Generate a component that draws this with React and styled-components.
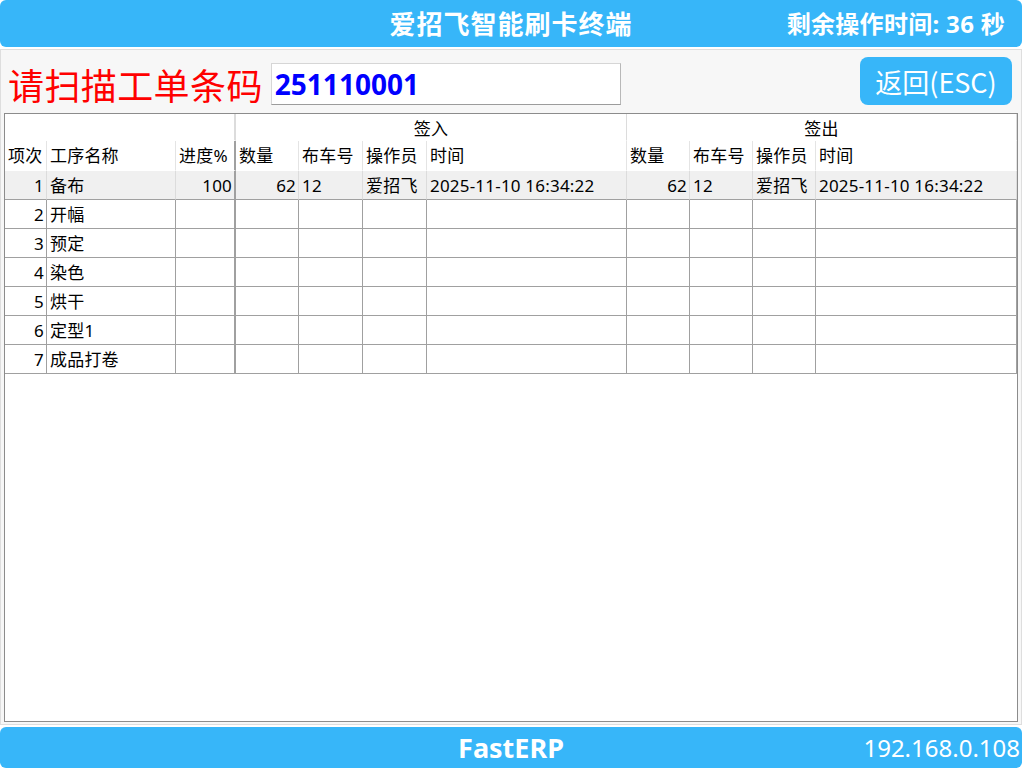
import React from "react"
import styled, { createGlobalStyle } from "styled-components"

const COLS = "42px 129px 60px 63px 64px 64px 200px 63px 63px 63px 201px"
const BLUE = "#37b6f9"

const ALIGN = ["right", "left", "right", "right", "left", "left", "left", "right", "left", "left", "left"]
const HEADERS = ["项次", "工序名称", "进度%", "数量", "布车号", "操作员", "时间", "数量", "布车号", "操作员", "时间"]

const ROWS = [
  ["1", "备布", "100", "62", "12", "爱招飞", "2025-11-10 16:34:22", "62", "12", "爱招飞", "2025-11-10 16:34:22"],
  ["2", "开幅"],
  ["3", "预定"],
  ["4", "染色"],
  ["5", "烘干"],
  ["6", "定型1"],
  ["7", "成品打卷"],
]

const GlobalStyle = createGlobalStyle`
  html, body {
    margin: 0;
    padding: 0;
    background: #fff;
  }
  body {
    font-family: "Noto Sans", "Noto Sans CJK SC", sans-serif;
  }
`

const Screen = styled.div`
  width: 1024px;
  height: 768px;
  display: flex;
  flex-direction: column;
  overflow: hidden;
`

const TopBar = styled.div`
  height: 47px;
  margin: 0 2px 2px 0;
  background: ${BLUE};
  border-radius: 6px;
  display: grid;
  grid-template-columns: 1fr auto 1fr;
  align-items: center;
  color: #fff;
  font-weight: bold;
`

const Title = styled.div`
  grid-column: 2;
  font-size: 26px;
  letter-spacing: 1px;
  line-height: 1;
`

const Timer = styled.div`
  grid-column: 3;
  justify-self: end;
  padding-right: 17px;
  font-size: 24px;
  letter-spacing: 0.3px;
  line-height: 1;
`

const Panel = styled.div`
  flex: 1;
  margin-right: 2px;
  background: #f7f7f7;
  border: 1px solid #dedede;
  display: flex;
  flex-direction: column;
  padding: 0 3px 2px 3px;
  min-height: 0;
`

const Toolbar = styled.div`
  height: 63px;
  display: flex;
  align-items: flex-start;
`

const ScanLabel = styled.div`
  margin: 14px 0 0 4px;
  color: #ff0000;
  font-family: "Noto Sans CJK SC", sans-serif;
  font-size: 36px;
  letter-spacing: 0.4px;
  line-height: 40px;
`

const CodeInput = styled.div`
  margin: 13px 0 0 8px;
  width: 345px;
  height: 40px;
  background: #fff;
  border: 1px solid #d6d6d6;
  border-right-color: #b8b8b8;
  border-bottom-color: #9c9c9c;
  display: flex;
  align-items: center;
  padding-left: 3px;
  color: #0000ff;
  font-weight: bold;
  font-size: 28px;
`

const BackButton = styled.button`
  margin: 7px 6px 0 auto;
  width: 152px;
  height: 48px;
  border: none;
  border-radius: 8px;
  background: ${BLUE};
  color: #fff;
  font-family: "Noto Sans CJK SC", sans-serif;
  font-size: 27px;
  padding: 0;
  cursor: pointer;
`

const Table = styled.div`
  flex: 1;
  background: #fff;
  border: 1px solid #8c8c8c;
  font-size: 17px;
  color: #000;
`

const Row = styled.div`
  display: grid;
  grid-template-columns: ${COLS};
  height: ${p => p.$h}px;
  background: ${p => p.$bg || "transparent"};
`

const Cell = styled.div`
  display: flex;
  align-items: center;
  justify-content: ${p => (p.$align === "right" ? "flex-end" : p.$align === "center" ? "center" : "flex-start")};
  padding: ${p => (p.$align === "right" ? "0 2px 0 0" : "0 0 0 3px")};
  border-right: ${p => (p.$thick ? 2 : 1)}px solid ${p => p.$line || "transparent"};
  border-bottom: 1px solid ${p => p.$bottom || "transparent"};
  box-sizing: border-box;
  white-space: nowrap;
  overflow: hidden;
  line-height: 1;
  letter-spacing: 0.2px;
  grid-column: ${p => p.$span || "auto"};
`

const GroupCell = styled(Cell)`
  padding: 0;
  padding-top: 2px;
`

const BottomBar = styled.div`
  height: 41px;
  margin: 2px 2px 0 0;
  background: ${BLUE};
  border-radius: 6px;
  display: grid;
  grid-template-columns: 1fr auto 1fr;
  align-items: center;
  color: #fff;
`

const Brand = styled.div`
  grid-column: 2;
  font-weight: bold;
  font-size: 27px;
  line-height: 1;
`

const Address = styled.div`
  grid-column: 3;
  justify-self: end;
  padding-right: 2px;
  font-size: 24px;
  line-height: 1;
`

function DataRow({ cells, first }) {
  return (
    <Row $h={29} $bg={first ? "#f0f0f0" : "#fff"}>
      {ALIGN.map((align, i) => (
        <Cell
          key={i}
          $align={align}
          $thick={i === 2}
          $line={i === 2 || !first ? "#a0a0a0" : "#dcdcdc"}
          $bottom="#a0a0a0"
        >
          {cells[i] || ""}
        </Cell>
      ))}
    </Row>
  )
}

export default function App() {
  return (
    <Screen>
      <GlobalStyle />
      <TopBar>
        <Title>爱招飞智能刷卡终端</Title>
        <Timer>剩余操作时间: 36 秒</Timer>
      </TopBar>

      <Panel>
        <Toolbar>
          <ScanLabel>请扫描工单条码</ScanLabel>
          <CodeInput>251110001</CodeInput>
          <BackButton>返回(ESC)</BackButton>
        </Toolbar>

        <Table>
          <Row $h={27}>
            <GroupCell $span="1 / 4" $thick $line="#dcdcdc" />
            <GroupCell $span="4 / 8" $align="center" $line="#dcdcdc">签入</GroupCell>
            <GroupCell $span="8 / 12" $align="center" $line="#dcdcdc">签出</GroupCell>
          </Row>
          <Row $h={30}>
            {HEADERS.map((h, i) => (
              <Cell key={i} $thick={i === 2} $line={i === 2 ? "#a0a0a0" : "#e4e4e4"}>
                {h}
              </Cell>
            ))}
          </Row>
          {ROWS.map((r, i) => (
            <DataRow key={i} cells={r} first={i === 0} />
          ))}
        </Table>
      </Panel>

      <BottomBar>
        <Brand>FastERP</Brand>
        <Address>192.168.0.108</Address>
      </BottomBar>
    </Screen>
  )
}
